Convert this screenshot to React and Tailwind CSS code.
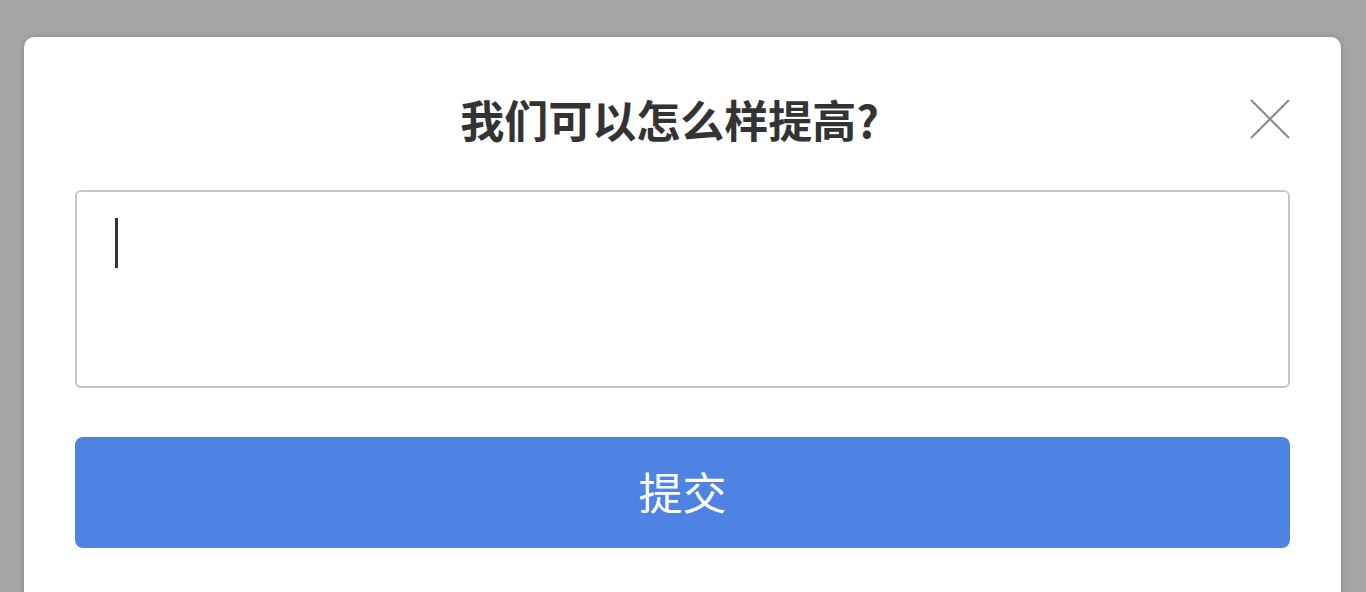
import React from "react";

export default function App() {
  return (
    <div
      className="h-[592px] w-full overflow-hidden bg-[#a5a5a5] pl-[24px] pr-[25px] pt-[37px]"
      style={{ fontFamily: '"Noto Sans CJK SC", "Noto Sans", sans-serif' }}
    >
      <div className="relative h-[640px] rounded-[10px] bg-white px-[51px] pt-[52px] shadow-[0_0_6px_rgba(0,0,0,0.18)]">
        {/* header */}
        <h2 className="pr-[26px] text-center text-[44px] leading-[60px] font-bold text-[#333333]">
          我们可以怎么样提高?
        </h2>
        <button className="absolute right-[51px] top-[62px] h-[40px] w-[40px] text-[#8c8c8c]">
          <svg viewBox="0 0 40 40" className="h-full w-full" fill="none" stroke="currentColor" strokeWidth="2.2">
            <path d="M1 1L39 39M39 1L1 39" />
          </svg>
        </button>

        {/* input box */}
        <div className="relative mt-[41px] h-[198px] rounded-[6px] border-2 border-[#c6c6c6] bg-white">
          <div className="absolute left-[38px] top-[26px] h-[50px] w-[3px] bg-[#333333]" />
        </div>

        {/* submit */}
        <button className="mt-[49px] flex h-[111px] w-full items-center justify-center rounded-[8px] bg-[#4f83e3] pb-[4px] text-[44px] text-white">
          提交
        </button>
      </div>
    </div>
  );
}
